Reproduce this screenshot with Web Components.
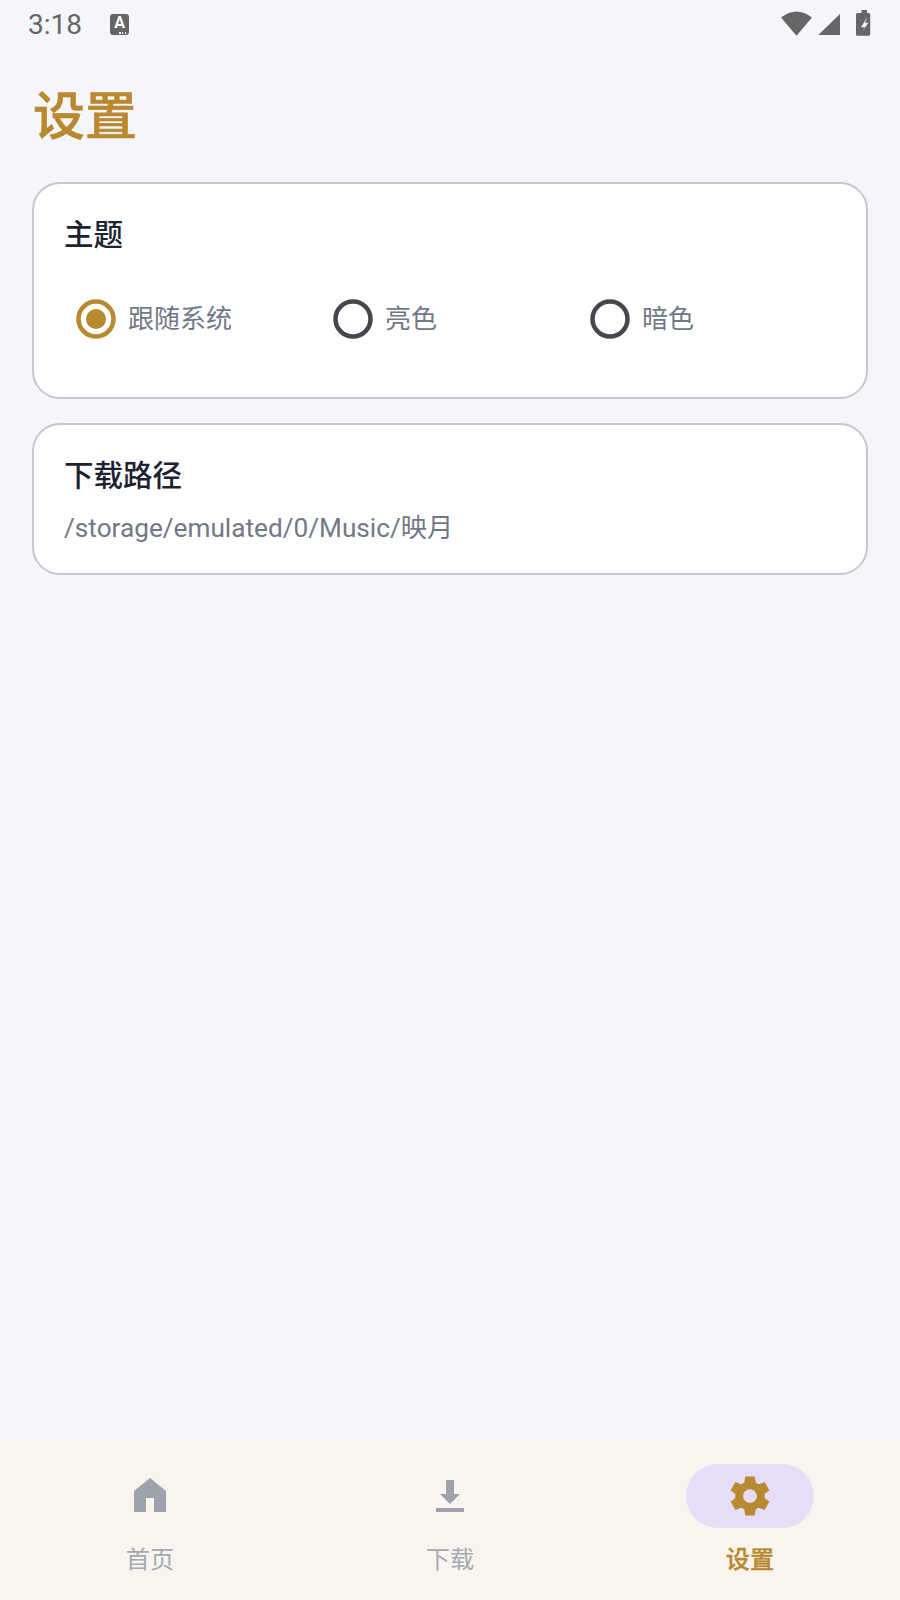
<!DOCTYPE html>
<html lang="zh-CN"><head><meta charset="utf-8"><title>设置</title>
<style>
html,body{margin:0;padding:0;background:#f4f6fb}
body{font-family:Roboto,"Noto Sans CJK SC",sans-serif;width:900px;height:1600px;overflow:hidden}
app-shell{height:1600px}
</style></head><body>
<app-shell>
  <status-bar slot="status"></status-bar>
  <page-title>设置</page-title>
  <setting-card heading="主题" variant="theme">
    <radio-group>
      <radio-option checked>跟随系统</radio-option>
      <radio-option>亮色</radio-option>
      <radio-option>暗色</radio-option>
    </radio-group>
  </setting-card>
  <setting-card heading="下载路径" variant="path">
    <path-text>/storage/emulated/0/Music/映月</path-text>
  </setting-card>
  <bottom-nav slot="nav">
    <nav-item label="首页" icon="home"></nav-item>
    <nav-item label="下载" icon="download"></nav-item>
    <nav-item label="设置" icon="settings" active></nav-item>
  </bottom-nav>
</app-shell>
<script>
const CJK='Roboto,"Noto Sans CJK SC",sans-serif';
function def(name,html,init){
  customElements.define(name,class extends HTMLElement{
    connectedCallback(){
      if(this.shadowRoot)return;
      const r=this.attachShadow({mode:'open'});
      r.innerHTML=typeof html==='function'?html(this):html;
      if(init)init(this,r);
    }
  });
}
def('app-shell',`<style>
:host{display:flex;flex-direction:column;width:900px;background:#f4f6fb;font-family:${CJK}}
main{flex:1;display:flex;flex-direction:column;padding:0 32px}
</style><slot name="status"></slot><main><slot></slot></main><slot name="nav"></slot>`);

def('status-bar',`<style>
:host{display:flex;align-items:center;height:50px;padding:0 29px 0 28px;box-sizing:border-box;color:#666;flex:none}
.t{font:400 28px/50px Roboto,sans-serif;width:82px}
.a{position:relative;width:19px;height:21px;border-radius:3px;background:#666;color:#fff;font:700 16px/18px Roboto,sans-serif;text-align:center;margin-top:-1px;overflow:hidden}
.d{position:absolute;left:9px;bottom:1.5px;width:8px;height:2px;background:repeating-linear-gradient(90deg,#fff 0 1.5px,transparent 1.5px 3px)}
.sp{flex:1}
svg{display:block;fill:#666}
</style>
<span class="t">3:18</span>
<span class="a">A<i class="d"></i></span>
<span class="sp"></span>
<svg width="90" height="50" viewBox="0 0 90 50">
<path d="M0 17.500Q15.500 5.500 31 17.500L15.500 35.700Z"/>
<path d="M59 14V35H37.300Z"/>
<path d="M79 13h1.500v-3h5.500v3h1.700a1.500 1.500 0 0 1 1.500 1.500V34.200A1.500 1.500 0 0 1 88.200 35.700H76.500A1.500 1.500 0 0 1 75 34.200V14.500A1.500 1.500 0 0 1 76.500 13Z"/>
<path d="M86.300 16.700 80 27.300h4L80.700 32.700 87.300 22.700H84Z" fill="#f4f6fb"/>
</svg>`);

def('page-title',`<style>
:host{display:block;padding:28px 0 34px 1px;font:500 52px/70px "Noto Sans CJK SC",sans-serif;color:#b8892f;flex:none;-webkit-text-stroke:.6px #b8892f}
</style><slot></slot>`);

def('setting-card',el=>`<style>
:host{display:block;background:#fff;border:2px solid #c9c5d2;border-radius:28px;box-sizing:border-box;margin-bottom:24.500px;padding:${el.getAttribute('variant')==='theme'?'28px 30px 45.500px':'28px 30px 25px'}}
h2{margin:0;font:500 29.500px/40px "Noto Sans CJK SC",sans-serif;color:#1a2233}
</style><h2>${el.getAttribute('heading')}</h2><slot></slot>`);

def('radio-group',`<style>
:host{display:grid;grid-template-columns:257px 257px 1fr;margin-top:35px}
</style><slot></slot>`);

def('radio-option',el=>`<style>
:host{display:flex;align-items:center;height:64px;color:#717887;font:400 26px/64px ${CJK}}
svg{display:block;flex:none}
</style><svg width="64" height="64" viewBox="0 0 64 64">
<circle cx="32" cy="32" r="17.500" fill="none" stroke="${el.hasAttribute('checked')?'#b8892f':'#49454f'}" stroke-width="4.500"/>
${el.hasAttribute('checked')?'<circle cx="32" cy="32" r="10" fill="#b8892f"/>':''}
</svg><span><slot></slot></span>`);

def('path-text',`<style>
:host{display:block;margin-top:15px;color:#717887;font:400 26.200px/40px ${CJK}}
</style><slot></slot>`);

def('bottom-nav',`<style>
:host{display:grid;grid-template-columns:repeat(3,1fr);height:160px;background:#f9f4ed;flex:none}
</style><slot></slot>`);

const ICONS={
home:'<path d="M24 6 40 19V40H28V26H20V40H8V19Z"/>',
download:'<path d="M20 8H28V22H34L24 32 14 22H20ZM10 36H38V40H10Z"/>',
settings:'<g transform="translate(.5 .5) scale(1.958)"><path d="M19.440 12.990l-.01.02c.04-.33.08-.67.08-1.010 0-.34-.03-.66-.07-.99l.01.02 2.440-1.920-2.430-4.220-2.870 1.160.01.01c-.52-.4-1.090-.74-1.710-1h.01L14.440 2H9.570l-.44 3.070h.01c-.62.26-1.190.6-1.710 1l.01-.01-2.880-1.170-2.440 4.220 2.440 1.920.01-.02c-.04.33-.07.65-.07.99 0 .34.04.68.09 1.010l-.01-.02-2.100 1.650-.33.26 2.430 4.200 2.880-1.150-.02-.04c.53.41 1.100.75 1.730 1.010h-.03L9.580 22h4.850s.03-.18.06-.42l.38-2.650h-.01c.62-.26 1.200-.6 1.730-1.010l-.02.04 2.880 1.150 2.430-4.200s-.14-.12-.33-.26l-2.110-1.660zM12 15.500c-1.930 0-3.500-1.570-3.500-3.500s1.570-3.500 3.500-3.500 3.500 1.570 3.500 3.500-1.570 3.500-3.500 3.500z"/></g>'
};
def('nav-item',el=>{
 const a=el.hasAttribute('active');
 return `<style>
:host{display:flex;flex-direction:column;align-items:center;padding-top:24px;box-sizing:border-box;color:${a?'#b8892f':'#a3a9b5'};font:500 24.200px/34px "Noto Sans CJK SC",sans-serif;font-weight:${a?500:400};${a?'-webkit-text-stroke:.3px #b8892f;':''}}
.p{width:128px;height:64px;border-radius:32px;display:flex;align-items:center;justify-content:center;background:${a?'#e8ddf6':'transparent'}}
svg{display:block}
.l{margin-top:13px}
.ic{fill:${a?'#b8892f':'#9ca3af'}}
</style><div class="p"><svg class="ic" width="48" height="48" viewBox="0 0 48 48">${ICONS[el.getAttribute('icon')]}</svg></div><div class="l">${el.getAttribute('label')}</div>`;
});
</script>
</body></html>
